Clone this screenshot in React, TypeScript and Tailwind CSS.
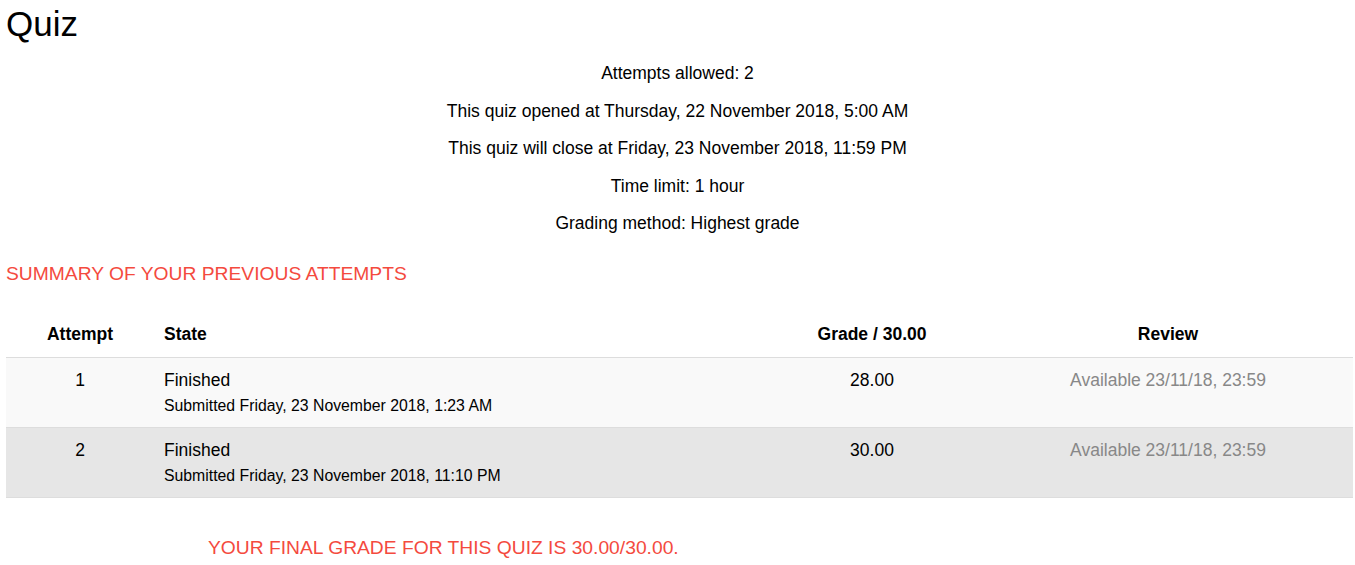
const info = [
  'Attempts allowed: 2',
  'This quiz opened at Thursday, 22 November 2018, 5:00 AM',
  'This quiz will close at Friday, 23 November 2018, 11:59 PM',
  'Time limit: 1 hour',
  'Grading method: Highest grade',
];

const attempts = [
  { n: 1, submitted: 'Submitted Friday, 23 November 2018, 1:23 AM', grade: '28.00', bg: 'bg-[#f9f9f9]' },
  { n: 2, submitted: 'Submitted Friday, 23 November 2018, 11:10 PM', grade: '30.00', bg: 'bg-[#e6e6e6]' },
];

const cols = 'grid grid-cols-[148px_607px_222px_1fr]';

export default function App() {
  return (
    <div className="min-h-[565px] bg-white px-[6px] text-black font-['Liberation_Sans',Arial,sans-serif]">
      <h1 className="pt-[4px] text-[35px] leading-[40px]">Quiz</h1>

      <div className="mt-[11px] text-center text-[17.5px]">
        {info.map((line) => (
          <p key={line} className="leading-[37.5px]">
            {line}
          </p>
        ))}
      </div>

      <h3 className="mt-[19px] text-[19.25px] leading-[24px] uppercase text-[#f44a3e]">
        Summary of your previous attempts
      </h3>

      <div className="mt-[24px] mr-[-4px] text-[17.5px]">
        <div className={`${cols} h-[48px] items-center pt-[3px] border-b border-[#dddddd] font-bold`}>
          <div className="text-center">Attempt</div>
          <div className="pl-[10px]">State</div>
          <div className="text-center">Grade / 30.00</div>
          <div className="text-center">Review</div>
        </div>
        {attempts.map((a) => (
          <div key={a.n} className={`${cols} ${a.bg} border-b border-[#dddddd] pt-[11px] pb-[11px]`}>
            <div className="text-center leading-[22px]">{a.n}</div>
            <div className="pl-[10px]">
              <div className="leading-[22px]">Finished</div>
              <div className="mt-[5px] text-[15.8px] leading-[20px]">{a.submitted}</div>
            </div>
            <div className="text-center leading-[22px]">{a.grade}</div>
            <div className="text-center leading-[22px] text-[#888888]">Available 23/11/18, 23:59</div>
          </div>
        ))}
      </div>

      <p className="mt-[38px] pl-[202px] text-[19.25px] leading-[24px] text-[#f44a3e]">
        YOUR FINAL GRADE FOR THIS QUIZ IS 30.00/30.00.
      </p>
    </div>
  );
}
